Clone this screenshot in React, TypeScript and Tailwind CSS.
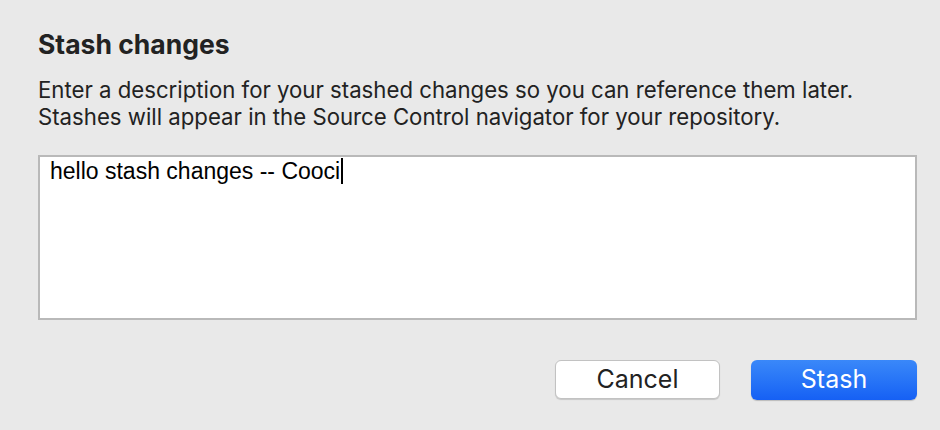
import React from "react";

const App = () => {
  return (
    <div className="h-[430px] w-[940px] bg-[#e9e9e9] pl-[38px] pr-[23px] pt-[29px] font-['Inter',sans-serif] text-[#1f1f1f]">
      <h1 className="text-[26.5px] font-bold leading-[30px] text-[#222]">Stash changes</h1>
      <p className="mt-[17px] text-[22.2px] leading-[27px] text-[#222]">
        Enter a description for your stashed changes so you can reference them later.
        <br />
        Stashes will appear in the Source Control navigator for your repository.
      </p>
      <div className="mt-[25px] h-[165px] w-full border-2 border-[#b9b9b9] bg-white px-[10px] pt-px">
        <div className="flex items-center">
          <span className="font-['Liberation_Sans',sans-serif] text-[23px] leading-[26px] text-black">
            hello stash changes -- Cooci
          </span>
          <div className="ml-px h-[26px] w-[2px] bg-black" />
        </div>
      </div>
      <div className="mt-[40px] flex justify-end gap-[31px]">
        <button className="h-[39px] w-[165px] rounded-[6px] border border-[#c2c2c2] bg-white text-[25px] text-[#222] shadow-[0_1px_1px_rgba(0,0,0,0.15)]">
          Cancel
        </button>
        <button className="h-[40px] w-[166px] rounded-[6px] bg-gradient-to-b from-[#3a88f9] to-[#1660f4] text-[25px] text-white shadow-[0_1px_1px_rgba(0,0,0,0.2)]">
          Stash
        </button>
      </div>
    </div>
  );
};

export default App;
